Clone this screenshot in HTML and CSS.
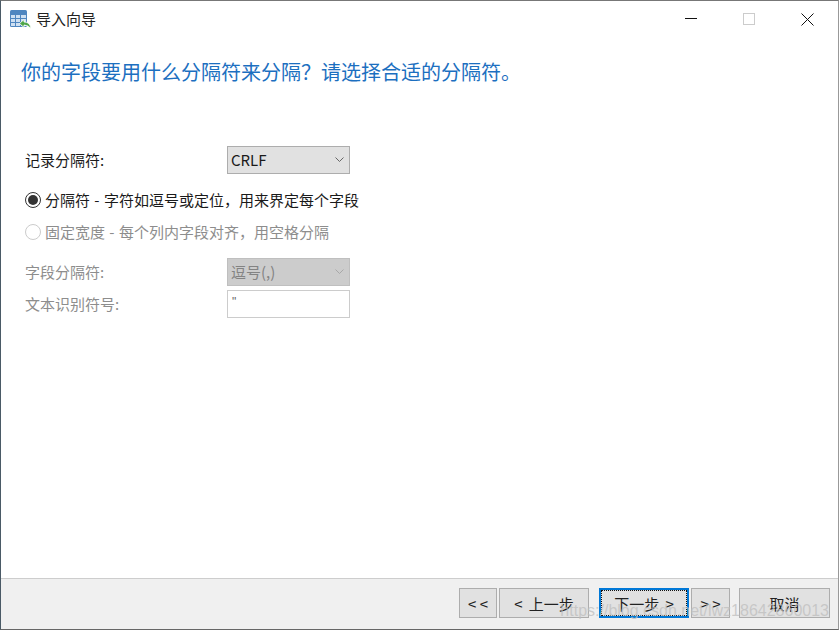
FILE: index.html
```html
<!DOCTYPE html>
<html lang="zh">
<head>
<meta charset="utf-8">
<title>导入向导</title>
<link rel="stylesheet" href="styles.css">
</head>
<body>
<div class="window">
  <header class="titlebar">
    <svg class="app-icon" width="21" height="20" viewBox="0 0 21 20">
      <rect x="0" y="0" width="17" height="17" rx="1.5" fill="#4f86c0"/>
      <rect x="1" y="5" width="4" height="3" fill="#cfe0f2"/><rect x="6" y="5" width="4" height="3" fill="#cfe0f2"/><rect x="11" y="5" width="5" height="3" fill="#cfe0f2"/>
      <rect x="1" y="9" width="4" height="3" fill="#cfe0f2"/><rect x="6" y="9" width="4" height="3" fill="#cfe0f2"/><rect x="11" y="9" width="5" height="3" fill="#cfe0f2"/>
      <rect x="1" y="13" width="4" height="3" fill="#cfe0f2"/><rect x="6" y="13" width="4" height="3" fill="#cfe0f2"/><rect x="11" y="13" width="5" height="3" fill="#cfe0f2"/>
      <path d="M9.500 13.500 L14 9.500 V12 Q20.500 12 20.500 18.500 Q18 15 14 15 V17.500 Z" fill="#4fa64a" stroke="#fff" stroke-width=".8"/>
    </svg>
    <span class="title">导入向导</span>
    <div class="controls">
      <svg class="ctl ctl-min" width="12" height="12" viewBox="0 0 12 12"><path d="M0 5.500H12" stroke="#111" stroke-width="1"/></svg>
      <svg class="ctl ctl-max" width="12" height="12" viewBox="0 0 12 12"><rect x=".5" y=".5" width="11" height="11" fill="none" stroke="#ccc"/></svg>
      <svg class="ctl ctl-close" width="13" height="13" viewBox="0 0 13 13"><path d="M.5 .5L12.500 12.500M12.500 .5L.5 12.500" stroke="#111" stroke-width="1"/></svg>
    </div>
  </header>
  <main class="content">
    <h1 class="heading">你的字段要用什么分隔符来分隔？请选择合适的分隔符。</h1>
    <div class="row row-record">
      <label class="label">记录分隔符:</label>
      <div class="combo"><span>CRLF</span><svg width="9" height="5" viewBox="0 0 9 5"><path d="M.5 .5L4.500 4.500L8.500 .5" fill="none" stroke="#666"/></svg></div>
    </div>
    <div class="radio radio-on"><span class="dot"></span><span>分隔符 - 字符如逗号或定位，用来界定每个字段</span></div>
    <div class="radio radio-off"><span class="dot"></span><span>固定宽度 - 每个列内字段对齐，用空格分隔</span></div>
    <div class="row row-field disabled">
      <label class="label">字段分隔符:</label>
      <div class="combo combo-off"><span>逗号(,)</span><svg width="9" height="5" viewBox="0 0 9 5"><path d="M.5 .5L4.500 4.500L8.500 .5" fill="none" stroke="#a8a8a8"/></svg></div>
    </div>
    <div class="row row-text disabled">
      <label class="label">文本识别符号:</label>
      <div class="textbox">"</div>
    </div>
  </main>
  <footer class="footer">
    <button class="btn btn-first">&lt; &lt;</button>
    <button class="btn btn-prev">&lt; 上一步</button>
    <button class="btn btn-next"><span class="focus">下一步 &gt;</span></button>
    <button class="btn btn-last">&gt; &gt;</button>
    <button class="btn btn-cancel">取消</button>
    <span class="watermark">https://blog.csdn.net/lwz18642860013</span>
  </footer>
</div>
</body>
</html>
```
FILE: styles.css
```css
* { box-sizing: border-box; }
html, body { margin: 0; height: 100%; background: #fff; overflow: hidden; }
body { font-family: "Noto Sans CJK SC", "Liberation Sans", sans-serif; color: #1a1a1a; }
.window {
  width: 839px; height: 630px;
  border-top: 1px solid #777; border-left: 1px solid #4a5a66; border-right: 1px solid #999; border-bottom: 1px solid #666;
  display: flex; flex-direction: column; background: #fff;
}
.titlebar { height: 36px; flex: none; display: flex; align-items: center; padding-left: 9px; }
.app-icon { flex: none; margin-right: 5px; margin-top: 1px; }
.title { font-size: 15px; line-height: 20px; color: #222; }
.controls { margin-left: auto; display: flex; align-items: center; padding-right: 24px; }
.ctl-min { margin-right: 46px; }
.ctl-max { margin-right: 46px; }
.content { flex: 1; padding: 0 0 0 20px; display: flex; flex-direction: column; min-height: 0; }
.heading { margin: 19px 0 0; font-size: 20px; line-height: 32px; font-weight: 400; color: #1c6fc0; white-space: nowrap; height: 32px; }
.row { display: flex; align-items: center; padding-left: 4px; }
.label { width: 202px; font-size: 15px; line-height: 18px; }
.combo {
  width: 123px; height: 28px; background: #e1e1e1; border: 1px solid #adadad;
  display: flex; align-items: center; justify-content: space-between; padding: 0 5px 1px 3px;
  font-size: 15px;
}
.combo-off { background: #ccc; border-color: #bfbfbf; color: #838383; }
.textbox { width: 123px; height: 28px; background: #fff; border: 1px solid #ccc; font-family: "Liberation Sans", sans-serif; font-size: 12px; line-height: 16px; padding: 3px 0 0 4px; color: #666; }
.row-record { margin-top: 58px; }
.radio { display: flex; align-items: center; padding-left: 4px; font-size: 15px; line-height: 18px; height: 18px; word-spacing: 1px; }
.radio .dot { width: 16px; height: 16px; border-radius: 50%; margin-right: 4px; flex: none; background: #fff; }
.radio-on { margin-top: 17px; }
.radio-on .dot { border: 1.500px solid #333; position: relative; }
.radio-on .dot::after { content: ""; position: absolute; left: 1.500px; top: 1.500px; width: 10px; height: 10px; border-radius: 50%; background: #333; }
.radio-off { margin-top: 14px; color: #8d8d8d; }
.radio-off .dot { border: 1px solid #ccc; }
.disabled .label { color: #8d8d8d; }
.row-field { margin-top: 17px; }
.row-text { margin-top: 4px; }
.footer {
  height: 51px; flex: none; background: #f0f0f0; border-top: 1px solid #cdcdcd;
  display: flex; align-items: center; justify-content: flex-end; padding: 0 8px 2px 0; position: relative;
}
.btn {
  height: 30px; background: #e1e1e1; border: 1px solid #adadad; padding: 0; margin: 0;
  font-family: "Noto Sans CJK SC", "Liberation Sans", sans-serif; font-size: 15px; color: #222;
  display: flex; align-items: center; justify-content: center;
}
.btn-first { width: 38px; margin-right: 2px; }
.btn-prev { width: 90px; margin-right: 10px; word-spacing: 3px; }
.btn-next { width: 90px; margin-right: 2px; border: 2px solid #0078d7; word-spacing: 3px; }
.focus { display: flex; align-items: center; justify-content: center; width: 100%; height: 100%; outline: 1px dotted #111; outline-offset: -1px; }
.btn-last { width: 39px; margin-right: 9px; }
.btn-cancel { width: 91px; }
.watermark {
  position: absolute; right: 9px; top: 23px; font-family: "Liberation Sans", sans-serif; font-size: 16px; line-height: 18px;
  color: rgba(190,190,190,.75); white-space: nowrap;
}
```
